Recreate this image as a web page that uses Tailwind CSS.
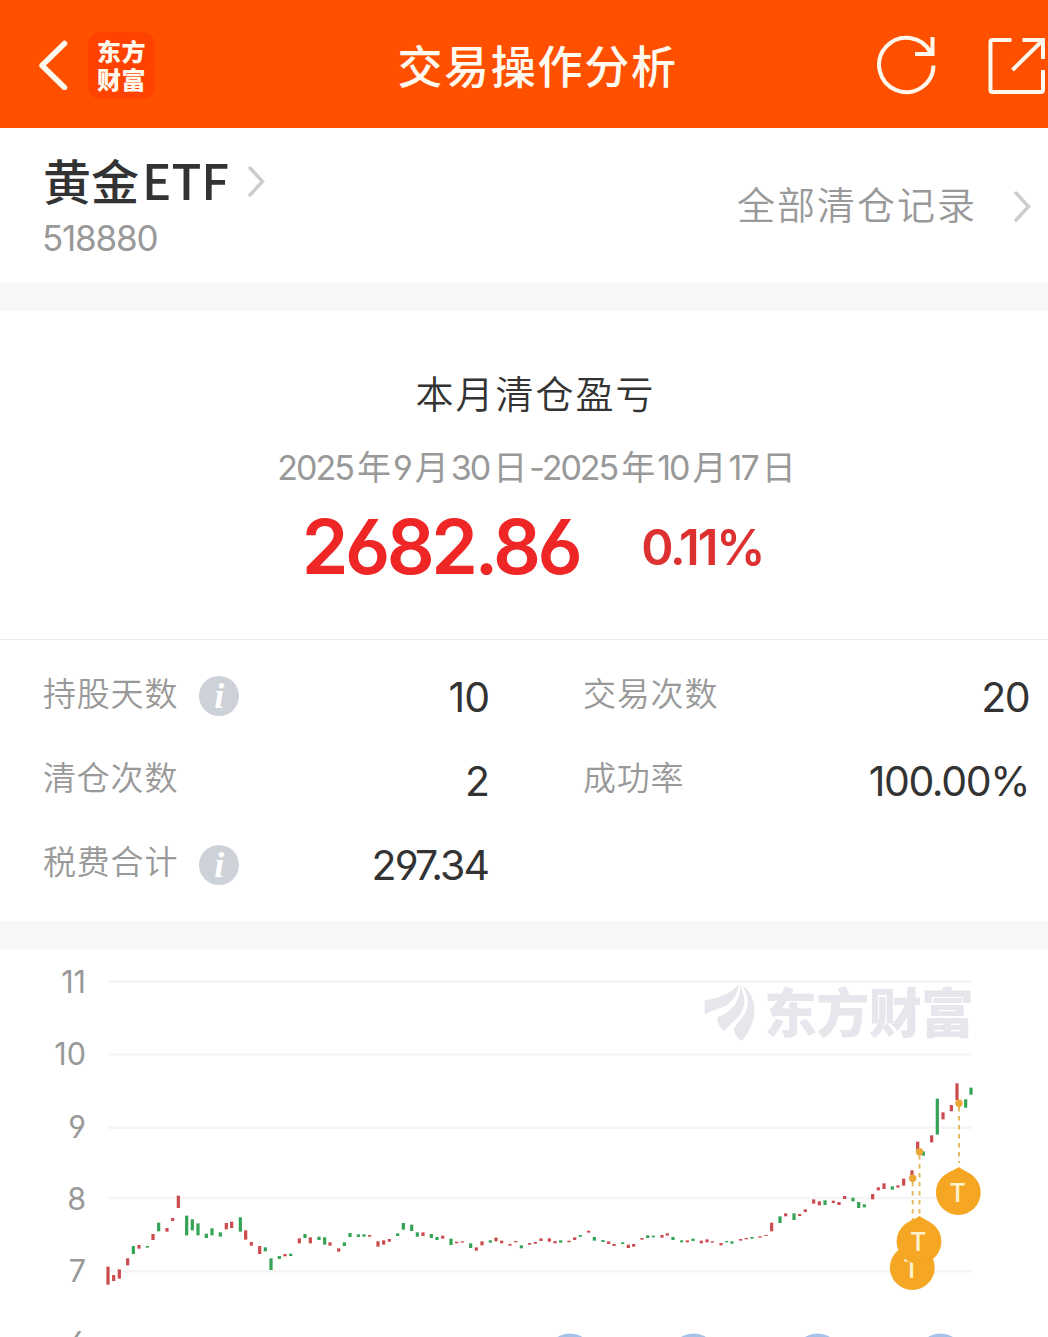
<!DOCTYPE html>
<html lang="zh-CN">
<head>
	<meta charset="utf-8">
	<title>交易操作分析</title>
	<script src="https://cdn.jsdelivr.net/npm/@tailwindcss/browser@4"></script>
</head>
<body class="bg-white w-[1048px] h-[1337px] overflow-hidden font-['Inter','Noto_Sans_CJK_SC',sans-serif] [font-feature-settings:'cv03','cv04'] text-[#333] leading-none whitespace-nowrap">

	<header class="flex items-center justify-between h-32 bg-[#ff5000] text-white">
		<div class="flex items-center w-[398px] pl-[37px]">
			<svg class="w-8 h-[52px]" viewBox="0 0 32 52" fill="none" stroke="#fffaf0" stroke-width="5.5" stroke-linecap="round" stroke-linejoin="round"><path d="M27.500 7 5 29 27.500 51" transform="translate(0 -1.500)"/></svg>
			<div class="ml-[19px] mt-[3px] flex flex-col items-center gap-1 w-[67px] h-[67px] pt-[7px] rounded-[13px] bg-[#ff4200] font-['Noto_Sans_CJK_SC',sans-serif] font-black text-[24px] tracking-[.5px] text-[#fff8ec]">
				<span>东方</span>
				<span>财富</span>
			</div>
		</div>
		<h1 class="font-['Noto_Sans_CJK_SC',sans-serif] font-medium text-[45px] tracking-[1.7px] text-[#fffaf0]">交易操作分析</h1>
		<div class="flex items-center justify-end w-[371px] gap-[50px] pt-[2px]">
			<svg class="w-[62px] h-[62px]" viewBox="875 34 62 62" fill="none" stroke="#fff8ec" stroke-width="4"><path d="M933.500 65.500A27.200 27.200 0 1 1 930.500 52.500M932.500 37v17h-17.500"/></svg>
			<svg class="w-[61px] h-[62px]" viewBox="987 34 61 62" fill="none" stroke="#fff8ec" stroke-width="4"><path d="M1011.500 40h-19q-2 0-2 2v48q0 2 2 2h48.500q2 0 2-2v-20M1022.500 40H1043v19M1012.500 70 1042 41"/></svg>
		</div>
	</header>

	<section class="flex justify-between h-[155px] pl-[43px] pr-[17px]">
		<div class="pt-[26px]">
			<div class="flex items-center">
				<h2 class="font-['Noto_Sans_CJK_SC',sans-serif] font-medium text-[48px]">黄金<span class="ml-[3px] text-[49px]">ETF</span></h2>
				<svg class="mt-1 ml-[18px] w-5 h-8" viewBox="0 0 20 32" fill="none" stroke="#ccc" stroke-width="3.500" stroke-linecap="round"><path d="M3 5 15.500 18.500 3 32" transform="translate(0 -2)"/></svg>
			</div>
			<div class="-ml-px mt-[18px] text-[35px] tracking-[-1.200px] text-[#999]">518880</div>
		</div>
		<div class="flex items-center h-[155px] gap-9 text-[#999]">
			<span class="pb-1.5 text-[38px] tracking-[2px] font-['Noto_Sans_CJK_SC',sans-serif] font-[350]">全部清仓记录</span>
			<svg class="w-[18px] h-8" viewBox="0 0 18 32" fill="none" stroke="#ccc" stroke-width="3.500" stroke-linecap="round"><path d="M3 3 15.500 16.500 3 30"/></svg>
		</div>
	</section>

	<div class="h-7 bg-[#f7f7f7]"></div>

	<section class="flex flex-col items-center h-[329px] pt-[62px] pl-[23px] border-b border-[#ebebeb]">
		<h3 class="font-['Noto_Sans_CJK_SC',sans-serif] font-[350] text-[38px] tracking-[2px]">本月清仓盈亏</h3>
		<div class="mt-[40px] text-[34px] tracking-[-2px] text-[#999]">2025<span class="mx-1">年</span>9<span class="mx-1">月</span>30<span class="mx-1">日</span>-2025<span class="mx-1">年</span>10<span class="mx-1">月</span>17<span class="ml-1">日</span></div>
		<div class="flex h-[75px] mt-[24px] mr-1.5 gap-[62px] font-semibold text-[#ee2626]">
			<span class="text-[75px] tracking-[-3.500px]">2682.86</span>
			<span class="pt-[14px] text-[49px] tracking-[-2.200px] text-[#dd3030]">0.11%</span>
		</div>
	</section>

	<section class="grid grid-cols-[446px_446px] auto-rows-[84.3px] gap-x-[94px] h-[281px] pt-[14px] pl-[43px] text-[33px] text-[#999]">
		<div class="flex items-center">
			<span class="pb-1 tracking-[0.8px] font-[350]">持股天数</span>
			<i class="ml-[21px] flex items-center justify-center size-10 rounded-full bg-[#cdd1d8] font-['Liberation_Serif',serif] font-bold text-[36px] text-white">i</i>
			<b class="ml-auto pt-0.5 font-normal text-[41px] tracking-[-1px] text-[#333]">10</b>
		</div>
		<div class="flex items-center">
			<span class="pb-1 tracking-[0.8px] font-[350]">交易次数</span>
			<b class="ml-auto pt-0.5 font-normal text-[41px] tracking-[-1.500px] text-[#333]">20</b>
		</div>
		<div class="flex items-center">
			<span class="pb-1 tracking-[0.8px] font-[350]">清仓次数</span>
			<b class="ml-auto pt-0.5 font-normal text-[41px] tracking-[-1px] text-[#333]">2</b>
		</div>
		<div class="flex items-center">
			<span class="pb-1 tracking-[0.8px] font-[350]">成功率</span>
			<b class="ml-auto pt-0.5 font-normal text-[41px] tracking-[-1.400px] text-[#333]">100.00%</b>
		</div>
		<div class="flex items-center">
			<span class="pb-1 tracking-[0.8px] font-[350]">税费合计</span>
			<i class="ml-[21px] flex items-center justify-center size-10 rounded-full bg-[#cdd1d8] font-['Liberation_Serif',serif] font-bold text-[36px] text-white">i</i>
			<b class="ml-auto mr-px pt-0.5 font-normal text-[41px] tracking-[-1.900px] text-[#333]">297.34</b>
		</div>
	</section>

	<div class="h-7 bg-[#f7f7f7]"></div>

	<svg class="block w-[1048px] h-[388px]" viewBox="0 949 1048 388">
		<g stroke="#f5f5f5" stroke-width="2.500">
			<path d="M108 981.500H972M108 1054.500H972M108 1127.700H972M108 1198H972M108 1271.300H972"/>
		</g>
		<g class="text-[30.500px]" fill="#999" text-anchor="end">
			<text x="86" y="993">11</text>
			<text x="86" y="1065">10</text>
			<text x="86" y="1138">9</text>
			<text x="86" y="1210">8</text>
			<text x="86" y="1282">7</text>
			<text x="86" y="1354">6</text>
		</g>

		<!-- watermark -->
		<g fill="#e6e6ec">
			<g transform="translate(690 970) scale(.3333)">
				<path d="M44 91C80 86 120 72 146 44 143 82 118 108 84 116 70 120 56 127 44 133Z"/>
				<path d="M150 46C152 104 116 128 82 143 82 160 89 173 103 184 120 154 192 130 150 46Z"/>
				<path d="M157 46C205 84 207 150 156 213 141 203 132 192 131 176 150 144 198 120 157 46Z"/>
			</g>
			<text x="764" y="1033" textLength="210" class="font-['Noto_Sans_CJK_SC',sans-serif] font-black text-[53px]">东方财富</text>
		</g>

		<g id="bars"></g>

		<g fill="#a5c3e8">
			<circle cx="570" cy="1357" r="23.500"/>
			<circle cx="693.500" cy="1357" r="23.500"/>
			<circle cx="817.500" cy="1357" r="23.500"/>
			<circle cx="940.500" cy="1357" r="23.500"/>
		</g>

		<!-- trade markers -->
		<g stroke="#e6b964" stroke-width="2" stroke-dasharray="4.500 4.500">
			<path d="M912.700 1182V1222M919.500 1155V1218M959 1107V1163"/>
		</g>
		<g fill="#eba834">
			<circle cx="912.700" cy="1178.300" r="3.700"/>
			<circle cx="919.500" cy="1151.700" r="3.700"/>
			<circle cx="959" cy="1103.300" r="3.700"/>
		</g>
		<defs>
			<path id="pin" d="M.5-25.500C4-22.800 10-20.500 15-16.600A22.400 22.400 0 1 1-15-16.600C-10-20.500-3-22.800 .5-25.500Z"/>
		</defs>
		<g class="font-['Roboto',sans-serif] font-medium text-[25px]" fill="#f5a623" text-anchor="middle">
			<use href="#pin" x="912.300" y="1267.500"/>
			<text x="911.500" y="1277.500" fill="#fff2cc">T</text>
			<use href="#pin" x="919" y="1241.500"/>
			<text x="918" y="1250.500" fill="#fff2cc">T</text>
			<use href="#pin" x="958.300" y="1192.500"/>
			<text x="957.700" y="1202" fill="#fff2cc">T</text>
		</g>
	</svg>

<script>

	// x, top, bottom, colour (in thirds of a pixel, relative to the segment origin)
	let segments = [
		{ x: 40, y: 960, bars: [
			[204,920,974,'r'],[221,945,963,'r'],[238,928,956,'r'],[263,895,916,'r'],[280,858,882,'g'],[297,855,866,'r'],[322,858,863,'g'],
			[339,822,840,'r'],[356,788,814,'g'],[381,804,815,'r'],[398,774,783,'r'],[415,707,744,'r'],[440,767,826,'g'],[457,778,811,'g'],
			[474,790,826,'g'],[499,821,834,'g'],[516,805,826,'g'],[541,817,830,'g'],[559,789,808,'r'],[575,785,804,'r'],[601,772,815,'g'],
			[617,811,839,'r'],[634,846,857,'r'],[659,858,882,'r'],[676,862,874,'g'],[693,895,930,'g'],[718,888,897,'g'],[735,882,889,'r'],[752,881,888,'g']
		]},
		{ x: 280, y: 1180, bars: [
			[58,175,190,'r'],[75,162,174,'g'],[91,172,190,'r'],[117,170,180,'g'],[134,172,194,'g'],[150,187,197,'r'],[176,205,215,'r'],
			[193,187,198,'g'],[210,159,171,'g'],[235,163,171,'g'],[252,163,170,'g'],[269,165,170,'r'],[294,184,200,'r'],[311,181,194,'r'],
			[328,177,185,'r'],[353,160,168,'g'],[370,129,149,'g'],[395,134,153,'g'],[412,157,170,'g'],[429,157,168,'r'],[454,162,174,'g'],
			[471,171,180,'g'],[488,167,176,'r'],[513,176,195,'g'],[530,185,190,'r'],[547,184,188,'r'],[572,190,204,'g'],[589,202,212,'r'],
			[606,184,196,'r'],[631,181,188,'g'],[648,173,184,'r'],[665,182,190,'r'],[690,192,197,'r'],[707,183,187,'r'],[724,196,205,'g'],
			[749,189,194,'r'],[766,186,191,'r']
		]},
		{ x: 530, y: 1180, bars: [
			[33,175,183,'r'],[58,175,185,'r'],[75,183,190,'r'],[92,181,188,'g'],[117,182,187,'r'],[134,172,180,'r'],[151,165,170,'g'],
			[176,152,158,'r'],[193,171,182,'g'],[219,180,186,'g'],[236,184,192,'r'],[252,192,198,'r'],[278,187,192,'g'],[295,194,204,'r'],
			[311,192,200,'r'],[336,174,179,'r'],[353,166,174,'g'],[370,167,172,'g'],[396,165,173,'r'],[412,160,167,'r'],[429,171,180,'g'],
			[455,181,187,'g'],[472,181,187,'r'],[489,176,183,'g'],[514,182,190,'r'],[531,178,187,'r'],[547,184,188,'r'],[573,189,196,'r'],
			[590,183,187,'g'],[606,184,191,'g'],[632,177,182,'r'],[649,174,178,'r'],[666,171,176,'g'],[690,169,173,'r'],[708,165,168,'r'],
			[725,128,154,'r'],[750,109,129,'g'],[767,100,109,'r']
		]},
		{ x: 750, y: 1070, bars: [
			[132,430,450,'g'],[149,432,438,'r'],[166,418,426,'r'],[191,388,401,'r'],[208,394,406,'r'],[225,391,405,'g'],[250,392,399,'r'],
			[267,396,405,'r'],[284,378,387,'r'],[309,383,394,'g'],[326,396,414,'g'],[343,403,412,'g'],[368,372,388,'r'],[385,352,361,'r'],
			[402,340,357,'r'],[427,349,359,'g'],[444,346,353,'r'],[461,326,347,'r'],[486,301,325,'r'],[503,215,240,'r'],[520,244,257,'g'],
			[545,196,217,'r'],[562,86,194,'g'],[579,127,148,'r'],[604,105,124,'r'],[621,40,90,'r'],[647,88,113,'g'],[663,53,74,'g']
		]}
	];

	let colors = { r: '#cb4b4e', g: '#35a355' };
	let group  = document.getElementById('bars');

	for (let segment of segments) {
		for (let [x, top, bottom, color] of segment.bars) {

			let rect = document.createElementNS('http://www.w3.org/2000/svg', 'rect');

			rect.setAttribute('x', segment.x + x / 3 - 1.6);
			rect.setAttribute('y', segment.y + top / 3);
			rect.setAttribute('width', 3.2);
			rect.setAttribute('height', (bottom - top) / 3);
			rect.setAttribute('fill', colors[color]);

			group.appendChild(rect);
		}
	}
</script>
</body>
</html>
